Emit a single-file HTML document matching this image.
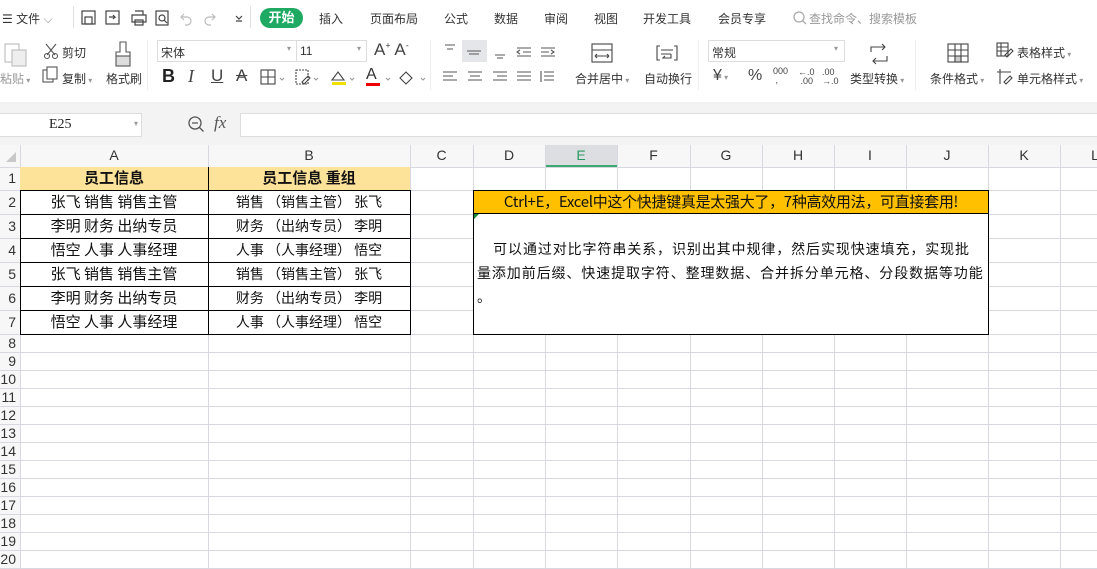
<!DOCTYPE html>
<html><head><meta charset="utf-8"><style>
*{margin:0;padding:0;box-sizing:border-box}
body{width:1097px;height:568px;overflow:hidden;background:#fff;font-family:"Liberation Sans","Noto Sans CJK SC",sans-serif;font-size:12px;color:#333;position:relative}
.a{position:absolute;white-space:nowrap}
.t{font-size:12px;color:#333}
.g{color:#999}
.ln{position:absolute;background:#d8d8e0}
.cell{position:absolute;text-align:center;font-size:15px;color:#111;font-family:"Noto Sans CJK SC",sans-serif;line-height:24px}
svg{position:absolute}
</style></head><body>
<div class="a t" style="left:2px;top:10px;font-size:12px">☰ 文件 <span class="g">⌵</span></div>
<div class="ln" style="left:73px;top:6px;width:1px;height:22px;background:#e0e0e0"></div>
<svg style="left:80px;top:9px" width="170" height="18" fill="none" stroke="#444" stroke-width="1.2">
<rect x="2" y="2" width="13" height="13"/><rect x="5" y="8" width="7" height="7"/>
<rect x="26" y="2" width="13" height="13"/><path d="M29 8h6l-2-2M35 8l-2 2"/>
<path d="M52 6h14v7h-14zM55 2h8v4M55 11h8v5h-8z"/>
<rect x="76" y="2" width="12" height="14"/><circle cx="82" cy="9" r="3"/><path d="M84 11l3 3"/>
<path stroke="#bbb" d="M104 5l-3 3 3 3M101 8h6a4 4 0 010 8h-2"/>
<path stroke="#bbb" d="M132 5l3 3-3 3M135 8h-6a4 4 0 000 8h2"/>
<path d="M156 7l3 3 3-3M156 12h6"/>
</svg>
<div class="ln" style="left:250px;top:6px;width:1px;height:22px;background:#e0e0e0"></div>
<div class="a" style="left:260px;top:8px;width:43px;height:20px;border-radius:10px;background:#1eaa62;color:#fff;font-size:13px;text-align:center;line-height:20px;font-weight:bold">开始</div>
<div class="a t" style="left:319px;top:10px">插入</div>
<div class="a t" style="left:370px;top:10px">页面布局</div>
<div class="a t" style="left:444px;top:10px">公式</div>
<div class="a t" style="left:494px;top:10px">数据</div>
<div class="a t" style="left:544px;top:10px">审阅</div>
<div class="a t" style="left:594px;top:10px">视图</div>
<div class="a t" style="left:643px;top:10px">开发工具</div>
<div class="a t" style="left:718px;top:10px">会员专享</div>
<svg style="left:792px;top:10px" width="16" height="16" fill="none" stroke="#aaa" stroke-width="1.3"><circle cx="7" cy="7" r="5"/><path d="M11 11l3 3"/></svg>
<div class="a t g" style="left:809px;top:10px">查找命令、搜索模板</div>

<svg style="left:3px;top:40px" width="140" height="50" fill="none" stroke="#555" stroke-width="1.1">
<rect x="2" y="4" width="14" height="18" stroke="#bbb"/><rect x="9" y="10" width="14" height="16" stroke="#bbb" fill="#eee"/>
<circle cx="44" cy="16" r="2.5"/><circle cx="52" cy="16" r="2.5"/><path d="M43 4l9 11M53 4l-9 11"/>
<rect x="40" y="30" width="10" height="12"/><rect x="44" y="27" width="10" height="12" fill="#fff"/>
<path d="M117 2h6v10h4v4h-14v-4h4z"/><rect x="113" y="16" width="14" height="10" fill="#ddd"/>
</svg>
<div class="a t" style="left:62px;top:44px">剪切</div>
<div class="a t g" style="left:0px;top:70px">粘贴<span style="font-size:8px"> ▾</span></div>
<div class="a t" style="left:62px;top:70px">复制<span class="g" style="font-size:8px"> ▾</span></div>
<div class="a t" style="left:106px;top:70px">格式刷</div>
<div class="ln" style="left:147px;top:40px;width:1px;height:50px;background:#eee"></div>

<div class="a" style="left:157px;top:40px;width:210px;height:22px;border:1px solid #ddd"></div>
<div class="ln" style="left:296px;top:40px;width:1px;height:22px;background:#ddd"></div>
<div class="a t" style="left:161px;top:44px">宋体</div>
<div class="a g" style="left:287px;top:44px;font-size:8px">▾</div>
<div class="a t" style="left:300px;top:44px">11</div>
<div class="a g" style="left:357px;top:44px;font-size:8px">▾</div>
<div class="a" style="left:374px;top:40px;font-size:17px;color:#444">A<sup style="font-size:9px">+</sup> A<sup style="font-size:9px">-</sup></div>
<div class="a" style="left:162px;top:66px;font-size:18px;font-weight:bold;color:#222">B</div>
<div class="a" style="left:188px;top:66px;font-size:18px;font-style:italic;color:#444;font-family:'Liberation Serif',serif">I</div>
<div class="a" style="left:211px;top:66px;font-size:17px;text-decoration:underline;color:#444">U</div>
<div class="a" style="left:236px;top:66px;font-size:17px;text-decoration:line-through;color:#444">A</div>
<svg style="left:260px;top:68px" width="170" height="20" fill="none" stroke="#444" stroke-width="1.1">
<rect x="1" y="2" width="14" height="14"/><path d="M8 2v14M1 9h14"/><path d="M20 10l2 2 2-2" stroke="#999"/>
<rect x="36" y="2" width="12" height="14" stroke-dasharray="2 1"/><path d="M42 14l6-6 2 2-6 6z"/><path d="M54 10l2 2 2-2" stroke="#999"/>
<path d="M72 12l6-8 6 8z"/><rect x="72" y="14" width="14" height="3" fill="#f0e000" stroke="none"/><path d="M90 10l2 2 2-2" stroke="#999"/>
<rect x="106" y="15" width="14" height="3" fill="#e00" stroke="none"/><path d="M126 10l2 2 2-2" stroke="#999"/>
<path d="M140 10l6-6 6 6-6 6z"/><path d="M161 10l2 2 2-2" stroke="#999"/>
</svg>
<div class="a" style="left:366px;top:66px;font-size:16px;color:#333">A</div>
<div class="ln" style="left:430px;top:40px;width:1px;height:50px;background:#eee"></div>

<div class="a" style="left:462px;top:40px;width:25px;height:22px;background:#e4e6ea"></div>
<svg style="left:440px;top:42px" width="130" height="45" fill="none" stroke="#555" stroke-width="1.1">
<path d="M5 3h10M7 7h6"/><path d="M27 9h14M29 12h10"/><path d="M55 13h10M57 16h6"/>
<path d="M77 6h14M83 10h8M77 14h14M80 8l-3 2 3 2"/><path d="M101 6h14M101 10h8M101 14h14M111 8l3 2-3 2"/>
<path d="M3 30h14M3 34h10M3 38h14"/><path d="M28 30h14M30 34h10M28 38h14"/><path d="M53 30h14M57 34h10M53 38h14"/><path d="M77 30h14M77 34h14M77 38h14"/><path d="M101 29v11M104 30h10M104 34h10M104 38h10"/>
</svg>
<svg style="left:590px;top:42px" width="100" height="24" fill="none" stroke="#444" stroke-width="1.1">
<rect x="2" y="2" width="20" height="18"/><path d="M2 8h20M5 14h14M5 14l2-2M5 14l2 2M19 14l-2-2M19 14l-2 2"/>
<path d="M70 4h-3v14h3M84 4h3v14h-3M71 8h12M71 12h10M81 12v4h-8l2-2"/>
</svg>
<div class="a t" style="left:575px;top:70px">合并居中<span class="g" style="font-size:8px"> ▾</span></div>
<div class="a t" style="left:644px;top:70px">自动换行</div>
<div class="ln" style="left:698px;top:40px;width:1px;height:50px;background:#eee"></div>

<div class="a" style="left:708px;top:40px;width:137px;height:22px;border:1px solid #ddd"></div>
<div class="a t" style="left:712px;top:44px">常规</div>
<div class="a g" style="left:834px;top:44px;font-size:8px">▾</div>
<div class="a" style="left:713px;top:67px;font-size:16px;color:#444">¥<span class="g" style="font-size:8px"> ▾</span></div>
<div class="a" style="left:748px;top:67px;font-size:16px;color:#444">%</div>
<div class="a" style="left:773px;top:67px;font-size:9px;color:#444;line-height:9px">000<br>&nbsp;,</div>
<div class="a" style="left:798px;top:68px;font-size:9px;color:#444;line-height:9px">←.0<br>&nbsp;.00</div>
<div class="a" style="left:822px;top:68px;font-size:9px;color:#444;line-height:9px">.00<br>→.0</div>
<svg style="left:867px;top:42px" width="24" height="24" fill="none" stroke="#444" stroke-width="1.1"><path d="M4 10V5h14M15 2l3 3-3 3M20 14v5H6M9 16l-3 3 3 3"/></svg>
<div class="a t" style="left:850px;top:70px">类型转换<span class="g" style="font-size:8px"> ▾</span></div>
<div class="ln" style="left:915px;top:40px;width:1px;height:50px;background:#eee"></div>

<svg style="left:946px;top:42px" width="24" height="22" fill="none" stroke="#444" stroke-width="1.1"><rect x="2" y="2" width="20" height="18"/><path d="M2 8h20M2 14h20M9 2v18M15 2v18"/><rect x="9" y="14" width="6" height="6" fill="#ccc"/></svg>
<div class="a t" style="left:930px;top:70px">条件格式<span class="g" style="font-size:8px"> ▾</span></div>
<svg style="left:996px;top:42px" width="18" height="18" fill="none" stroke="#444" stroke-width="1.1"><rect x="1" y="1" width="11" height="13"/><path d="M1 5h11M1 9h11M5 1v13M9 13l6-6 2 2-6 6z"/></svg>
<div class="a t" style="left:1017px;top:44px">表格样式<span class="g" style="font-size:8px"> ▾</span></div>
<svg style="left:996px;top:68px" width="18" height="18" fill="none" stroke="#444" stroke-width="1.1"><path d="M1 4h14M4 1v15M8 14l6-6 2 2-6 6z"/></svg>
<div class="a t" style="left:1017px;top:70px">单元格样式<span class="g" style="font-size:8px"> ▾</span></div>

<div class="a" style="left:0;top:102px;width:1097px;height:43px;background:#f3f3f3"></div>
<div class="a" style="left:-1px;top:113px;width:143px;height:24px;background:#fff;border:1px solid #ddd"></div>
<div class="a" style="left:49px;top:117px;font-family:'Liberation Serif',serif;font-size:14px;color:#222">E25</div>
<div class="a g" style="left:134px;top:119px;font-size:8px">▾</div>
<svg style="left:187px;top:115px" width="20" height="20" fill="none" stroke="#555" stroke-width="1.3"><circle cx="8" cy="8" r="6"/><path d="M5 8h6M12.5 12.5l4 4"/></svg>
<div class="a" style="left:214px;top:113px;font-family:'Liberation Serif',serif;font-style:italic;font-size:17px;color:#555">fx</div>
<div class="a" style="left:240px;top:113px;width:860px;height:24px;background:#fff;border:1px solid #ddd"></div>

<div class="a" style="left:0;top:145px;width:1097px;height:22px;background:#f7f7f7"></div>
<div class="a" style="left:0;top:145px;width:20px;height:423px;background:#f7f7f7"></div>
<div class="a" style="left:545px;top:145px;width:72px;height:22px;background:#dcdee2;border-bottom:2px solid #3aa870"></div>
<svg style="left:4px;top:150px" width="14" height="14"><path d="M12 2v10H2z" fill="#c8c8c8"/></svg>
<div id="grid"></div>
<script>
var cols=[20,208,410,473,545,617,690,762,834,906,988,1060,1130];
var names=['A','B','C','D','E','F','G','H','I','J','K','L'];
var rows=[167,190,214,238,262,286,310,334];
for(var y=352;y<=580;y+=18)rows.push(y);
var h='';
for(var i=0;i<cols.length;i++)h+='<div class="ln" style="left:'+cols[i]+'px;top:145px;width:1px;height:423px"></div>';
for(var j=0;j<rows.length;j++)h+='<div class="ln" style="left:0;top:'+rows[j]+'px;width:1097px;height:1px"></div>';
for(var i=0;i<names.length;i++)h+='<div class="a" style="left:'+cols[i]+'px;top:147px;width:'+(cols[i+1]-cols[i])+'px;text-align:center;font-size:14px;color:'+(i==4?'#2a9a60':'#333')+'">'+names[i]+'</div>';
for(var j=0;j<rows.length-1;j++)h+='<div class="a" style="left:-4px;top:'+rows[j]+'px;width:20px;height:'+(rows[j+1]-rows[j])+'px;text-align:right;font-size:14px;color:#333;line-height:'+(rows[j+1]-rows[j])+'px">'+(j+1)+'</div>';
document.getElementById('grid').innerHTML=h;
</script>
<div class="a" style="left:20px;top:167px;width:390px;height:23px;background:#fde29a"></div>
<div class="cell" style="left:20px;top:166px;width:188px;font-weight:bold">员工信息</div>
<div class="cell" style="left:208px;top:166px;width:202px;font-weight:bold">员工信息 重组</div>
<div class="a" style="left:20px;top:190px;width:391px;height:145px;border:1px solid #000"></div>
<div class="a" style="left:208px;top:167px;width:1px;height:168px;background:#000"></div>
<div class="a" style="left:20px;top:214px;width:390px;height:1px;background:#000"></div>
<div class="a" style="left:20px;top:238px;width:390px;height:1px;background:#000"></div>
<div class="a" style="left:20px;top:262px;width:390px;height:1px;background:#000"></div>
<div class="a" style="left:20px;top:286px;width:390px;height:1px;background:#000"></div>
<div class="a" style="left:20px;top:310px;width:390px;height:1px;background:#000"></div>
<div class="cell" style="left:20px;top:190px;width:188px">张飞 销售 销售主管</div>
<div class="cell" style="left:20px;top:214px;width:188px">李明 财务 出纳专员</div>
<div class="cell" style="left:20px;top:238px;width:188px">悟空 人事 人事经理</div>
<div class="cell" style="left:20px;top:262px;width:188px">张飞 销售 销售主管</div>
<div class="cell" style="left:20px;top:286px;width:188px">李明 财务 出纳专员</div>
<div class="cell" style="left:20px;top:310px;width:188px">悟空 人事 人事经理</div>
<div class="cell" style="left:208px;top:190px;width:202px;font-size:14px">销售 （销售主管） 张飞</div>
<div class="cell" style="left:208px;top:214px;width:202px;font-size:14px">财务 （出纳专员） 李明</div>
<div class="cell" style="left:208px;top:238px;width:202px;font-size:14px">人事 （人事经理） 悟空</div>
<div class="cell" style="left:208px;top:262px;width:202px;font-size:14px">销售 （销售主管） 张飞</div>
<div class="cell" style="left:208px;top:286px;width:202px;font-size:14px">财务 （出纳专员） 李明</div>
<div class="cell" style="left:208px;top:310px;width:202px;font-size:14px">人事 （人事经理） 悟空</div>
<div class="a" style="left:473px;top:190px;width:516px;height:145px;background:#fff;border:1px solid #000"></div>
<div class="a" style="left:474px;top:191px;width:514px;height:23px;background:#ffc000;border-bottom:1px solid #000;text-align:center;font-size:15px;line-height:22px;color:#111;font-family:'Noto Sans CJK SC',sans-serif;letter-spacing:-0.3px">Ctrl+E，Excel中这个快捷键真是太强大了，7种高效用法，可直接套用!</div>
<svg style="left:474px;top:214px" width="6" height="6"><path d="M0 0h5L0 5z" fill="#1a8a3a"/></svg>
<div class="a" style="left:477px;top:237px;width:512px;font-size:14px;line-height:24px;color:#111;white-space:nowrap;font-family:'Noto Sans CJK SC',sans-serif;letter-spacing:0.9px">&nbsp;&nbsp;&nbsp;&nbsp;可以通过对比字符串关系，识别出其中规律，然后实现快速填充，实现批<br>量添加前后缀、快速提取字符、整理数据、合并拆分单元格、分段数据等功能<br>。</div>
</body></html>
